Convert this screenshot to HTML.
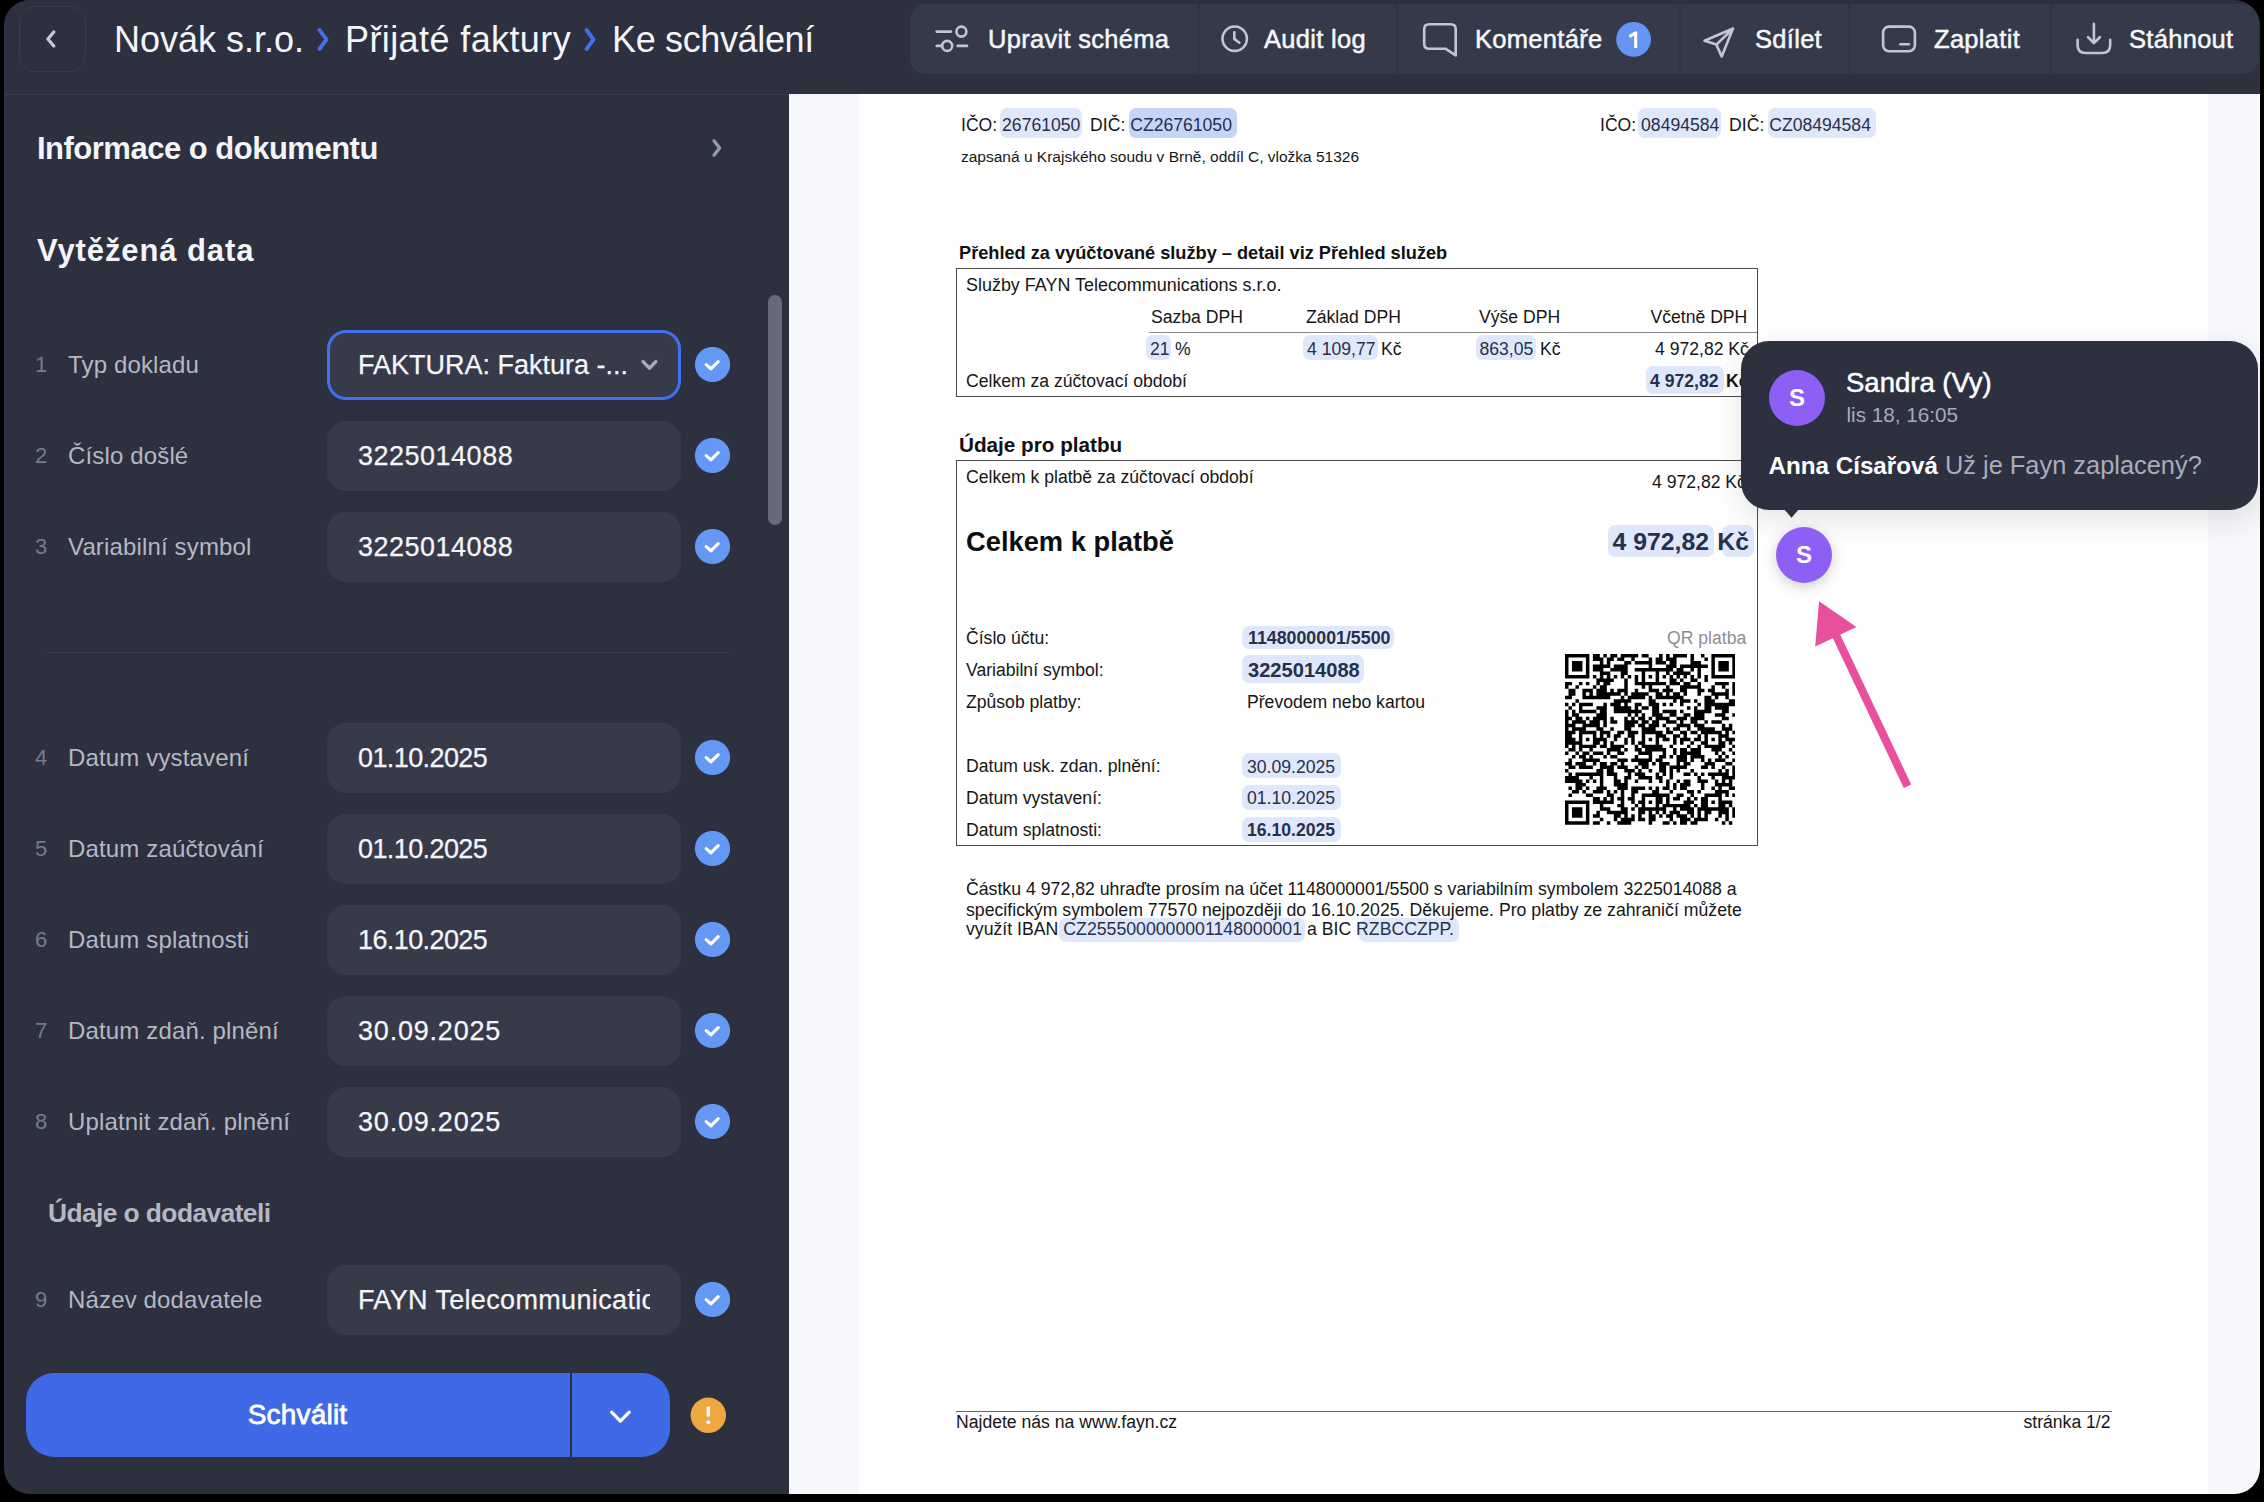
<!DOCTYPE html>
<html><head><meta charset="utf-8">
<style>
*{margin:0;padding:0;box-sizing:border-box}
html,body{width:2264px;height:1502px;background:#000;overflow:hidden;font-family:"Liberation Sans",sans-serif}
#app{position:absolute;left:4px;top:0;width:2256px;height:1494px;border-radius:26px;overflow:hidden;background:#2c303f}
.abs{position:absolute;white-space:nowrap}
#hdr{position:absolute;left:0;top:0;width:2256px;height:95px;background:#2c303f;border-bottom:1px solid #383c4c}
#back{position:absolute;left:15px;top:6px;width:67px;height:66px;border:1px solid #393c4e;border-radius:17px}
.crumb{position:absolute;top:20px;font-size:36px;color:#f4f5f8;line-height:40px}
.sep{color:#5480f2}
#tools{position:absolute;left:906px;top:4px;width:1349px;height:70px;background:#353a4b;border-radius:16px}
.tdiv{position:absolute;top:0;width:2px;height:70px;background:#2f3343}
.tl{position:absolute;top:22.4px;font-size:25.5px;letter-spacing:0.3px;color:#f6f7fa;line-height:34px;-webkit-text-stroke:0.5px #f6f7fa;white-space:nowrap}
#left{position:absolute;left:0;top:0;width:785px;height:1494px}
.h1{position:absolute;font-size:31px;font-weight:bold;color:#f4f5f8;line-height:36px}
.num{position:absolute;left:31px;font-size:22px;color:#767b8b;line-height:30px}
.lab{position:absolute;left:64px;font-size:24px;letter-spacing:0.15px;color:#b5b8c2;line-height:30px;white-space:nowrap}
.inp{position:absolute;left:323px;width:354px;height:70px;border-radius:19px;background:#373b49}
.val{position:absolute;left:31px;top:19px;font-size:27px;color:#f4f5f8;line-height:32px;white-space:nowrap;overflow:hidden;-webkit-text-stroke:0.25px #f4f5f8}
.chk{position:absolute;left:690px;width:35px;height:35px;border-radius:50%;background:#6597f5}
#doc{position:absolute;left:785px;top:94px;width:1471px;height:1400px;background:#f7f8fc}
#page{position:absolute;left:70px;top:0;width:1349px;height:1400px;background:#fff}
.d{position:absolute;white-space:nowrap;color:#111;font-size:17.5px;line-height:20px}
.hl{background:#dfe7fb;border-radius:7px}
</style></head><body>
<div id="app">
  <div id="hdr">
    <div id="back"><svg width="67" height="66" style="position:absolute;left:-1px;top:-1px"><path d="M34.8 26 L28.9 33 L34.8 40" fill="none" stroke="#c4c7d4" stroke-width="3.3" stroke-linecap="round" stroke-linejoin="round"/></svg></div>
    <div class="crumb" style="left:110px">Novák s.r.o.</div>
    <svg class="abs" style="left:310.5px;top:27px" width="16" height="26"><path d="M4.5 3 L11.5 12.5 L4.5 22" fill="none" stroke="#4370ea" stroke-width="3.8" stroke-linecap="round" stroke-linejoin="round"/></svg>
    <div class="crumb" style="left:341px;letter-spacing:0.4px">Přijaté faktury</div>
    <svg class="abs" style="left:578px;top:27px" width="16" height="26"><path d="M4.5 3 L11.5 12.5 L4.5 22" fill="none" stroke="#4370ea" stroke-width="3.8" stroke-linecap="round" stroke-linejoin="round"/></svg>
    <div class="crumb" style="left:608px;letter-spacing:-0.35px">Ke schválení</div>
    <div id="tools">
      <div class="tdiv" style="left:288px"></div>
      <div class="tdiv" style="left:486px"></div>
      <div class="tdiv" style="left:769px"></div>
      <div class="tdiv" style="left:938px"></div>
      <div class="tdiv" style="left:1140px"></div>
    </div>
    <svg class="abs" style="left:0;top:0" width="2256" height="94">
      <g fill="none" stroke="#c3c6d2" stroke-width="2.6" stroke-linecap="round">
        <!-- sliders -->
        <line x1="932.7" y1="31.6" x2="946.9" y2="31.6"/><circle cx="957.4" cy="31.6" r="5"/>
        <line x1="932.7" y1="45.9" x2="938" y2="45.9"/><circle cx="943.2" cy="45.9" r="5"/><line x1="953.7" y1="45.9" x2="963" y2="45.9"/>
        <!-- clock -->
        <circle cx="1230.7" cy="38.7" r="12.2"/><path d="M1230.3 32.4 V38.9 L1235.3 42.7" stroke-linejoin="round"/>
        <!-- comment -->
        <path d="M1425.2 24.2 H1446.7 Q1451.7 24.2 1451.7 29.2 V55.4 L1441.4 48.7 H1425.2 Q1420.2 48.7 1420.2 43.7 V29.2 Q1420.2 24.2 1425.2 24.2 Z" stroke-linejoin="round"/>
        <!-- send -->
        <path d="M1700.5 40.7 L1729 28.5 L1717.7 56.4 L1712.4 44.6 Z M1712.4 44.6 L1729 28.5" stroke-linejoin="round"/>
        <!-- card -->
        <rect x="1879.1" y="26.6" width="31.8" height="24.7" rx="6"/><line x1="1896.5" y1="44.2" x2="1904.8" y2="44.2"/>
        <!-- download -->
        <path d="M2089.9 23.9 V43.1 M2084 37.2 L2089.9 43.1 L2095.9 37.2" stroke-linejoin="round"/>
        <path d="M2073.6 39.7 V45 Q2073.6 53 2081.6 53 H2098.2 Q2106.2 53 2106.2 45 V39.7"/>
      </g>
      <circle cx="1629.6" cy="39.4" r="17.4" fill="#6595f3"/>
    </svg>
    <div class="tl" style="left:984px">Upravit schéma</div>
    <div class="tl" style="left:1260px">Audit log</div>
    <div class="tl" style="left:1471px">Komentáře</div>
    <svg class="abs" style="left:1612px;top:22px" width="36" height="36"><path d="M13.4 14.6 L19.7 10.8 V26" fill="none" stroke="#fff" stroke-width="3.1" stroke-linecap="butt" stroke-linejoin="round"/></svg>
    <div class="tl" style="left:1751px">Sdílet</div>
    <div class="tl" style="left:1930px">Zaplatit</div>
    <div class="tl" style="left:2125px">Stáhnout</div>
  </div>
  <div id="left">
<div class="h1" style="left:33px;top:131px;letter-spacing:-0.5px">Informace o dokumentu</div>
<svg class="abs" style="left:702px;top:136px" width="20" height="24"><path d="M8 4.8 L13.6 12 L8 19.2" fill="none" stroke="#959caf" stroke-width="3.3" stroke-linecap="round" stroke-linejoin="round"/></svg>
<div class="h1" style="left:33px;top:233px;letter-spacing:0.9px">Vytěžená data</div>
<div class="abs" style="left:764px;top:295px;width:14px;height:230px;border-radius:7px;background:#666a7b"></div>
<div class="abs" style="left:43px;top:652px;width:683px;height:1px;background:#383c4b"></div>
<div class="h1" style="left:44px;top:1195px;font-size:26.4px;letter-spacing:-0.6px;color:#b5b8c2">Údaje o dodavateli</div>
<div class="num" style="top:350px">1</div><div class="lab" style="top:350px">Typ dokladu</div>
<div class="inp" style="top:330px;border:3px solid #4270ee;background:#373b49"><div class="val" style="left:28px;top:16px">FAKTURA: Faktura -...</div><svg class="abs" style="left:310px;top:26px" width="20" height="16"><path d="M3.1 2.6 L9.4 9.2 L15.8 2.6" fill="none" stroke="#a9acb6" stroke-width="3.4" stroke-linecap="round" stroke-linejoin="round"/></svg></div>
<svg class="abs" style="left:690px;top:347px" width="36" height="36"><circle cx="18.5" cy="17.5" r="17.6" fill="#6597f5"/><path d="M12.2 17.6 L16.9 21.8 L24.2 14.6" fill="none" stroke="#fff" stroke-width="3.2" stroke-linecap="round" stroke-linejoin="round"/></svg>
<div class="num" style="top:441px">2</div><div class="lab" style="top:441px">Číslo došlé</div>
<div class="inp" style="top:421px"><div class="val" style="letter-spacing:0.5px">3225014088</div></div>
<svg class="abs" style="left:690px;top:438px" width="36" height="36"><circle cx="18.5" cy="17.5" r="17.6" fill="#6597f5"/><path d="M12.2 17.6 L16.9 21.8 L24.2 14.6" fill="none" stroke="#fff" stroke-width="3.2" stroke-linecap="round" stroke-linejoin="round"/></svg>
<div class="num" style="top:532px">3</div><div class="lab" style="top:532px">Variabilní symbol</div>
<div class="inp" style="top:512px"><div class="val" style="letter-spacing:0.5px">3225014088</div></div>
<svg class="abs" style="left:690px;top:529px" width="36" height="36"><circle cx="18.5" cy="17.5" r="17.6" fill="#6597f5"/><path d="M12.2 17.6 L16.9 21.8 L24.2 14.6" fill="none" stroke="#fff" stroke-width="3.2" stroke-linecap="round" stroke-linejoin="round"/></svg>
<div class="num" style="top:743px">4</div><div class="lab" style="top:743px">Datum vystavení</div>
<div class="inp" style="top:723px"><div class="val" style="letter-spacing:-0.6px">01.10.2025</div></div>
<svg class="abs" style="left:690px;top:740px" width="36" height="36"><circle cx="18.5" cy="17.5" r="17.6" fill="#6597f5"/><path d="M12.2 17.6 L16.9 21.8 L24.2 14.6" fill="none" stroke="#fff" stroke-width="3.2" stroke-linecap="round" stroke-linejoin="round"/></svg>
<div class="num" style="top:834px">5</div><div class="lab" style="top:834px">Datum zaúčtování</div>
<div class="inp" style="top:814px"><div class="val" style="letter-spacing:-0.6px">01.10.2025</div></div>
<svg class="abs" style="left:690px;top:831px" width="36" height="36"><circle cx="18.5" cy="17.5" r="17.6" fill="#6597f5"/><path d="M12.2 17.6 L16.9 21.8 L24.2 14.6" fill="none" stroke="#fff" stroke-width="3.2" stroke-linecap="round" stroke-linejoin="round"/></svg>
<div class="num" style="top:925px">6</div><div class="lab" style="top:925px">Datum splatnosti</div>
<div class="inp" style="top:905px"><div class="val" style="letter-spacing:-0.6px">16.10.2025</div></div>
<svg class="abs" style="left:690px;top:922px" width="36" height="36"><circle cx="18.5" cy="17.5" r="17.6" fill="#6597f5"/><path d="M12.2 17.6 L16.9 21.8 L24.2 14.6" fill="none" stroke="#fff" stroke-width="3.2" stroke-linecap="round" stroke-linejoin="round"/></svg>
<div class="num" style="top:1016px">7</div><div class="lab" style="top:1016px">Datum zdaň. plnění</div>
<div class="inp" style="top:996px"><div class="val" style="letter-spacing:0.8px">30.09.2025</div></div>
<svg class="abs" style="left:690px;top:1013px" width="36" height="36"><circle cx="18.5" cy="17.5" r="17.6" fill="#6597f5"/><path d="M12.2 17.6 L16.9 21.8 L24.2 14.6" fill="none" stroke="#fff" stroke-width="3.2" stroke-linecap="round" stroke-linejoin="round"/></svg>
<div class="num" style="top:1107px">8</div><div class="lab" style="top:1107px">Uplatnit zdaň. plnění</div>
<div class="inp" style="top:1087px"><div class="val" style="letter-spacing:0.8px">30.09.2025</div></div>
<svg class="abs" style="left:690px;top:1104px" width="36" height="36"><circle cx="18.5" cy="17.5" r="17.6" fill="#6597f5"/><path d="M12.2 17.6 L16.9 21.8 L24.2 14.6" fill="none" stroke="#fff" stroke-width="3.2" stroke-linecap="round" stroke-linejoin="round"/></svg>
<div class="num" style="top:1285px">9</div><div class="lab" style="top:1285px">Název dodavatele</div>
<div class="inp" style="top:1265px"><div class="val" style="width:292px;letter-spacing:0.35px">FAYN Telecommunications s.r.o.</div></div>
<svg class="abs" style="left:690px;top:1282px" width="36" height="36"><circle cx="18.5" cy="17.5" r="17.6" fill="#6597f5"/><path d="M12.2 17.6 L16.9 21.8 L24.2 14.6" fill="none" stroke="#fff" stroke-width="3.2" stroke-linecap="round" stroke-linejoin="round"/></svg>
<div class="abs" style="left:22px;top:1373px;width:644px;height:84px;border-radius:28px;background:#3f69e6"></div>
<div class="abs" style="left:566px;top:1373px;width:2px;height:84px;background:#2c303f"></div>
<div class="abs" style="left:22px;top:1393px;width:543px;text-align:center;font-size:28px;letter-spacing:0.2px;color:#fff;line-height:44px;-webkit-text-stroke:0.8px #fff">Schválit</div>
<svg class="abs" style="left:600px;top:1401px" width="32" height="28"><path d="M7.6 11.2 L16.4 20.1 L25.2 11.2" fill="none" stroke="#fff" stroke-width="3.3" stroke-linecap="round" stroke-linejoin="round"/></svg>
<svg class="abs" style="left:686px;top:1397px" width="36" height="36"><circle cx="18.3" cy="18.3" r="17.7" fill="#eea741"/><path d="M18.3 9.6 V19.6" stroke="#fff" stroke-width="3.4" stroke-linecap="butt"/><circle cx="18.3" cy="25.2" r="2" fill="#fff"/></svg>
</div>

  <div id="doc"><div id="page"></div></div>
<div id="P" style="position:absolute;left:-4px;top:0;width:2264px;height:1502px">
<!--DOC-->
<div class="abs" style="left:999.7px;top:107.8px;width:82.4px;height:29.9px;background:#dfe7fb;border-radius:7px"></div>
<div class="abs" style="left:1129.0px;top:107.8px;width:108.2px;height:29.9px;background:#c6d5f7;border-radius:7px"></div>
<div class="d" style="left:961px;top:116.60px;font-size:17.6px;line-height:17.6px;color:#161616;">IČO: <span style="color:#27304a">26761050</span>&nbsp; DIČ: <span style="color:#27304a">CZ26761050</span></div>
<div class="d" style="left:961px;top:148.98px;font-size:15.5px;line-height:15.5px;color:#161616;">zapsaná u Krajského soudu v Brně, oddíl C, vložka 51326</div>
<div class="abs" style="left:1638.3px;top:107.8px;width:82.7px;height:29.9px;background:#dfe7fb;border-radius:7px"></div>
<div class="abs" style="left:1767.5px;top:107.8px;width:108.1px;height:29.9px;background:#dfe7fb;border-radius:7px"></div>
<div class="d" style="left:1600px;top:116.60px;font-size:17.6px;line-height:17.6px;color:#161616;">IČO: <span style="color:#27304a">08494584</span>&nbsp; DIČ: <span style="color:#27304a">CZ08494584</span></div>
<div class="d" style="left:959px;top:243.99px;font-size:18.2px;line-height:18.2px;font-weight:bold;color:#111;">Přehled za vyúčtované služby – detail viz Přehled služeb</div>
<div class="abs" style="left:955.5px;top:267.8px;width:802.5px;height:129.2px;border:1.5px solid #4a4a4a"></div>
<div class="d" style="left:966px;top:276.91px;font-size:17.95px;line-height:17.95px;color:#161616;">Služby FAYN Telecommunications s.r.o.</div>
<div class="d" style="left:1151px;top:308.80px;font-size:17.6px;line-height:17.6px;color:#161616;">Sazba DPH</div>
<div class="d" style="left:1306px;top:308.80px;font-size:17.6px;line-height:17.6px;color:#161616;">Základ DPH</div>
<div class="d" style="left:1479px;top:308.80px;font-size:17.6px;line-height:17.6px;color:#161616;">Výše DPH</div>
<div class="d" style="left:1650.5px;top:308.80px;font-size:17.6px;line-height:17.6px;color:#161616;">Včetně DPH</div>
<div class="abs" style="left:1148.7px;top:331.5px;width:608.3px;height:1.3px;background:#8a8a8a"></div>
<div class="abs" style="left:1146.0px;top:334.8px;width:24.5px;height:25.7px;background:#dfe7fb;border-radius:7px"></div>
<div class="d" style="left:1150px;top:341.10px;font-size:17.6px;line-height:17.6px;color:#27304a;">21</div>
<div class="d" style="left:1175px;top:341.10px;font-size:17.6px;line-height:17.6px;color:#161616;">%</div>
<div class="abs" style="left:1303.2px;top:335.3px;width:75.1px;height:24.9px;background:#dfe7fb;border-radius:7px"></div>
<div class="d" style="left:1307px;top:341.10px;font-size:17.6px;line-height:17.6px;color:#27304a;">4 109,77</div>
<div class="d" style="left:1381px;top:341.10px;font-size:17.6px;line-height:17.6px;color:#161616;">Kč</div>
<div class="abs" style="left:1476.0px;top:335.3px;width:59.7px;height:24.9px;background:#dfe7fb;border-radius:7px"></div>
<div class="d" style="left:1479.5px;top:341.10px;font-size:17.6px;line-height:17.6px;color:#27304a;">863,05</div>
<div class="d" style="left:1540px;top:341.10px;font-size:17.6px;line-height:17.6px;color:#161616;">Kč</div>
<div class="d" style="left:1655px;top:341.10px;font-size:17.6px;line-height:17.6px;color:#161616;">4 972,82 Kč</div>
<div class="d" style="left:966px;top:372.80px;font-size:17.6px;line-height:17.6px;color:#161616;">Celkem za zúčtovací období</div>
<div class="abs" style="left:1645.5px;top:365.5px;width:78.4px;height:28.3px;background:#dfe7fb;border-radius:7px"></div>
<div class="d" style="left:1650px;top:372.50px;font-size:17.6px;line-height:17.6px;font-weight:bold;color:#27304a;">4 972,82</div>
<div class="d" style="left:1726px;top:372.50px;font-size:17.6px;line-height:17.6px;font-weight:bold;color:#161616;">Kč</div>
<div class="d" style="left:959px;top:435.18px;font-size:20.7px;line-height:20.7px;font-weight:bold;color:#111;">Údaje pro platbu</div>
<div class="abs" style="left:955.5px;top:460.3px;width:802.5px;height:385.49999999999994px;border:1.5px solid #4a4a4a"></div>
<div class="d" style="left:966px;top:469.10px;font-size:17.6px;line-height:17.6px;color:#161616;">Celkem k platbě za zúčtovací období</div>
<div class="d" style="left:1652px;top:473.90px;font-size:17.6px;line-height:17.6px;color:#161616;">4 972,82 Kč</div>
<div class="d" style="left:966px;top:528.39px;font-size:27.3px;line-height:27.3px;font-weight:bold;color:#0d0d0d;">Celkem k platbě</div>
<div class="abs" style="left:1608.1px;top:525.3px;width:105.9px;height:31.4px;background:#dfe7fb;border-radius:7px"></div>
<div class="abs" style="left:1722.0px;top:525.3px;width:31.8px;height:31.4px;background:#dfe7fb;border-radius:7px"></div>
<div class="d" style="left:1612.5px;top:530.21px;font-size:24.8px;line-height:24.8px;font-weight:bold;color:#27304a;">4 972,82</div>
<div class="d" style="left:1717.3px;top:530.21px;font-size:24.8px;line-height:24.8px;font-weight:bold;color:#27304a;">Kč</div>
<div class="d" style="left:966px;top:629.70px;font-size:17.6px;line-height:17.6px;color:#161616;">Číslo účtu:</div>
<div class="abs" style="left:1242.4px;top:626.0px;width:152.1px;height:23.3px;background:#dfe7fb;border-radius:7px"></div>
<div class="d" style="left:1248px;top:629.53px;font-size:17.8px;line-height:17.8px;font-weight:bold;color:#27304a;">1148000001/5500</div>
<div class="d" style="left:1667px;top:629.70px;font-size:17.6px;line-height:17.6px;color:#8e8e8e;">QR platba</div>
<div class="d" style="left:966px;top:662.00px;font-size:17.6px;line-height:17.6px;color:#161616;">Variabilní symbol:</div>
<div class="abs" style="left:1242.4px;top:654.5px;width:121.3px;height:28.2px;background:#dfe7fb;border-radius:7px"></div>
<div class="d" style="left:1248px;top:659.89px;font-size:20.1px;line-height:20.1px;font-weight:bold;color:#27304a;">3225014088</div>
<div class="d" style="left:966px;top:693.60px;font-size:17.6px;line-height:17.6px;color:#161616;">Způsob platby:</div>
<div class="d" style="left:1247px;top:693.60px;font-size:17.6px;line-height:17.6px;color:#161616;">Převodem nebo kartou</div>
<div class="d" style="left:966px;top:757.70px;font-size:17.6px;line-height:17.6px;color:#161616;">Datum usk. zdan. plnění:</div>
<div class="abs" style="left:1242.4px;top:753.2px;width:98.3px;height:24.8px;background:#dfe7fb;border-radius:7px"></div>
<div class="d" style="left:1247px;top:758.50px;font-size:17.6px;line-height:17.6px;color:#27304a;">30.09.2025</div>
<div class="d" style="left:966px;top:790.00px;font-size:17.6px;line-height:17.6px;color:#161616;">Datum vystavení:</div>
<div class="abs" style="left:1242.4px;top:784.8px;width:98.3px;height:24.8px;background:#dfe7fb;border-radius:7px"></div>
<div class="d" style="left:1247px;top:790.00px;font-size:17.6px;line-height:17.6px;color:#27304a;">01.10.2025</div>
<div class="d" style="left:966px;top:822.30px;font-size:17.6px;line-height:17.6px;color:#161616;">Datum splatnosti:</div>
<div class="abs" style="left:1242.4px;top:817.0px;width:98.3px;height:25.3px;background:#dfe7fb;border-radius:7px"></div>
<div class="d" style="left:1247px;top:822.30px;font-size:17.6px;line-height:17.6px;font-weight:bold;color:#27304a;">16.10.2025</div>
<div class="abs" style="left:1058.7px;top:917.5px;width:246.8px;height:24.9px;background:#dfe7fb;border-radius:7px"></div>
<div class="abs" style="left:1359.3px;top:917.5px;width:100.2px;height:24.9px;background:#dfe7fb;border-radius:7px"></div>
<div class="d" style="left:966px;top:881.22px;font-size:17.7px;line-height:17.7px;color:#161616;">Částku 4 972,82 uhraďte prosím na účet 1148000001/5500 s variabilním symbolem 3225014088 a</div>
<div class="d" style="left:966px;top:901.62px;font-size:17.7px;line-height:17.7px;color:#161616;">specifickým symbolem 77570 nejpozději do 16.10.2025. Děkujeme. Pro platby ze zahraničí můžete</div>
<div class="d" style="left:966px;top:921.22px;font-size:17.7px;line-height:17.7px;color:#161616;">využít IBAN <span style="color:#27304a">CZ2555000000001148000001</span> a BIC <span style="color:#27304a">RZBCCZPP.</span></div>
<div class="abs" style="left:955.5px;top:1410.6px;width:1156.5px;height:1.6px;background:#666"></div>
<div class="d" style="left:956px;top:1413.70px;font-size:17.6px;line-height:17.6px;color:#161616;">Najdete nás na www.fayn.cz</div>
<div class="d" style="left:2023.5px;top:1413.70px;font-size:17.6px;line-height:17.6px;color:#161616;">stránka 1/2</div>
<svg class="abs" style="left:1564.5px;top:654.1px" width="170.8" height="170.8" viewBox="0 0 49 49" ><path d="M0 0h7v1h-7zM8 0h2v1h-2zM11 0h1v1h-1zM13 0h2v1h-2zM16 0h5v1h-5zM22 0h2v1h-2zM27 0h1v1h-1zM29 0h1v1h-1zM31 0h4v1h-4zM36 0h1v1h-1zM39 0h1v1h-1zM42 0h7v1h-7zM0 1h1v1h-1zM6 1h1v1h-1zM8 1h3v1h-3zM12 1h2v1h-2zM15 1h2v1h-2zM19 1h1v1h-1zM24 1h1v1h-1zM26 1h2v1h-2zM29 1h3v1h-3zM36 1h1v1h-1zM40 1h1v1h-1zM42 1h1v1h-1zM48 1h1v1h-1zM0 2h1v1h-1zM2 2h3v1h-3zM6 2h1v1h-1zM10 2h1v1h-1zM12 2h1v1h-1zM17 2h2v1h-2zM20 2h5v1h-5zM26 2h3v1h-3zM30 2h2v1h-2zM36 2h3v1h-3zM42 2h1v1h-1zM44 2h3v1h-3zM48 2h1v1h-1zM0 3h1v1h-1zM2 3h3v1h-3zM6 3h1v1h-1zM8 3h5v1h-5zM14 3h4v1h-4zM24 3h1v1h-1zM29 3h3v1h-3zM33 3h8v1h-8zM42 3h1v1h-1zM44 3h3v1h-3zM48 3h1v1h-1zM0 4h1v1h-1zM2 4h3v1h-3zM6 4h1v1h-1zM8 4h3v1h-3zM13 4h5v1h-5zM20 4h11v1h-11zM32 4h2v1h-2zM36 4h1v1h-1zM38 4h1v1h-1zM42 4h1v1h-1zM44 4h3v1h-3zM48 4h1v1h-1zM0 5h1v1h-1zM6 5h1v1h-1zM10 5h3v1h-3zM16 5h2v1h-2zM22 5h1v1h-1zM26 5h1v1h-1zM29 5h1v1h-1zM31 5h5v1h-5zM38 5h1v1h-1zM42 5h1v1h-1zM48 5h1v1h-1zM0 6h7v1h-7zM8 6h1v1h-1zM10 6h1v1h-1zM12 6h1v1h-1zM14 6h1v1h-1zM16 6h1v1h-1zM18 6h1v1h-1zM20 6h1v1h-1zM22 6h1v1h-1zM24 6h1v1h-1zM26 6h1v1h-1zM28 6h1v1h-1zM30 6h1v1h-1zM32 6h1v1h-1zM34 6h1v1h-1zM36 6h1v1h-1zM38 6h1v1h-1zM40 6h1v1h-1zM42 6h7v1h-7zM9 7h5v1h-5zM17 7h1v1h-1zM20 7h1v1h-1zM22 7h1v1h-1zM26 7h1v1h-1zM30 7h2v1h-2zM33 7h1v1h-1zM36 7h2v1h-2zM40 7h1v1h-1zM0 8h2v1h-2zM4 8h1v1h-1zM6 8h1v1h-1zM9 8h1v1h-1zM11 8h2v1h-2zM17 8h1v1h-1zM20 8h9v1h-9zM30 8h3v1h-3zM34 8h2v1h-2zM38 8h1v1h-1zM43 8h4v1h-4zM48 8h1v1h-1zM0 9h1v1h-1zM3 9h1v1h-1zM8 9h1v1h-1zM10 9h2v1h-2zM17 9h1v1h-1zM22 9h1v1h-1zM24 9h1v1h-1zM29 9h1v1h-1zM33 9h6v1h-6zM42 9h1v1h-1zM45 9h1v1h-1zM48 9h1v1h-1zM1 10h2v1h-2zM5 10h3v1h-3zM9 10h3v1h-3zM13 10h1v1h-1zM15 10h3v1h-3zM20 10h1v1h-1zM24 10h3v1h-3zM28 10h3v1h-3zM33 10h2v1h-2zM38 10h2v1h-2zM41 10h2v1h-2zM46 10h1v1h-1zM48 10h1v1h-1zM1 11h2v1h-2zM5 11h1v1h-1zM7 11h1v1h-1zM9 11h7v1h-7zM17 11h1v1h-1zM19 11h5v1h-5zM26 11h2v1h-2zM29 11h1v1h-1zM31 11h2v1h-2zM34 11h1v1h-1zM38 11h1v1h-1zM42 11h5v1h-5zM48 11h1v1h-1zM0 12h2v1h-2zM5 12h8v1h-8zM16 12h1v1h-1zM18 12h5v1h-5zM24 12h1v1h-1zM26 12h8v1h-8zM40 12h2v1h-2zM43 12h1v1h-1zM46 12h1v1h-1zM3 13h1v1h-1zM14 13h5v1h-5zM24 13h2v1h-2zM31 13h1v1h-1zM33 13h3v1h-3zM37 13h1v1h-1zM40 13h3v1h-3zM47 13h2v1h-2zM0 14h1v1h-1zM2 14h1v1h-1zM4 14h4v1h-4zM11 14h1v1h-1zM13 14h3v1h-3zM17 14h1v1h-1zM20 14h2v1h-2zM24 14h3v1h-3zM28 14h1v1h-1zM30 14h1v1h-1zM33 14h1v1h-1zM38 14h1v1h-1zM40 14h9v1h-9zM1 15h1v1h-1zM4 15h1v1h-1zM9 15h3v1h-3zM14 15h5v1h-5zM20 15h1v1h-1zM22 15h2v1h-2zM25 15h2v1h-2zM35 15h1v1h-1zM37 15h1v1h-1zM40 15h2v1h-2zM43 15h4v1h-4zM0 16h1v1h-1zM2 16h1v1h-1zM4 16h5v1h-5zM10 16h2v1h-2zM14 16h8v1h-8zM25 16h2v1h-2zM28 16h4v1h-4zM33 16h1v1h-1zM37 16h5v1h-5zM45 16h2v1h-2zM0 17h1v1h-1zM2 17h2v1h-2zM9 17h3v1h-3zM18 17h1v1h-1zM20 17h1v1h-1zM22 17h1v1h-1zM25 17h3v1h-3zM30 17h2v1h-2zM34 17h2v1h-2zM37 17h3v1h-3zM43 17h3v1h-3zM48 17h1v1h-1zM0 18h2v1h-2zM3 18h2v1h-2zM6 18h1v1h-1zM8 18h4v1h-4zM13 18h1v1h-1zM17 18h1v1h-1zM19 18h1v1h-1zM21 18h2v1h-2zM24 18h1v1h-1zM26 18h4v1h-4zM32 18h3v1h-3zM36 18h4v1h-4zM45 18h2v1h-2zM0 19h1v1h-1zM2 19h4v1h-4zM7 19h3v1h-3zM11 19h1v1h-1zM13 19h2v1h-2zM17 19h4v1h-4zM22 19h2v1h-2zM25 19h2v1h-2zM29 19h3v1h-3zM33 19h1v1h-1zM36 19h2v1h-2zM40 19h1v1h-1zM42 19h3v1h-3zM0 20h3v1h-3zM5 20h5v1h-5zM11 20h1v1h-1zM17 20h3v1h-3zM21 20h2v1h-2zM24 20h3v1h-3zM28 20h1v1h-1zM32 20h4v1h-4zM37 20h3v1h-3zM45 20h1v1h-1zM47 20h1v1h-1zM0 21h1v1h-1zM2 21h4v1h-4zM9 21h2v1h-2zM13 21h1v1h-1zM17 21h2v1h-2zM22 21h4v1h-4zM29 21h1v1h-1zM31 21h2v1h-2zM35 21h1v1h-1zM38 21h5v1h-5zM45 21h3v1h-3zM0 22h3v1h-3zM4 22h5v1h-5zM10 22h3v1h-3zM15 22h2v1h-2zM18 22h3v1h-3zM22 22h6v1h-6zM29 22h2v1h-2zM33 22h2v1h-2zM36 22h2v1h-2zM39 22h6v1h-6zM46 22h1v1h-1zM48 22h1v1h-1zM0 23h2v1h-2zM4 23h1v1h-1zM8 23h1v1h-1zM10 23h1v1h-1zM12 23h1v1h-1zM14 23h2v1h-2zM18 23h2v1h-2zM22 23h1v1h-1zM26 23h3v1h-3zM31 23h2v1h-2zM34 23h1v1h-1zM38 23h1v1h-1zM40 23h1v1h-1zM44 23h3v1h-3zM0 24h3v1h-3zM4 24h1v1h-1zM6 24h1v1h-1zM8 24h4v1h-4zM14 24h1v1h-1zM17 24h1v1h-1zM19 24h1v1h-1zM22 24h1v1h-1zM24 24h1v1h-1zM26 24h1v1h-1zM28 24h2v1h-2zM31 24h1v1h-1zM33 24h3v1h-3zM37 24h2v1h-2zM40 24h1v1h-1zM42 24h1v1h-1zM44 24h1v1h-1zM46 24h3v1h-3zM0 25h5v1h-5zM8 25h2v1h-2zM11 25h1v1h-1zM13 25h1v1h-1zM17 25h1v1h-1zM19 25h1v1h-1zM21 25h2v1h-2zM26 25h1v1h-1zM31 25h1v1h-1zM33 25h1v1h-1zM36 25h1v1h-1zM39 25h2v1h-2zM44 25h2v1h-2zM47 25h1v1h-1zM0 26h1v1h-1zM2 26h1v1h-1zM4 26h5v1h-5zM10 26h2v1h-2zM13 26h4v1h-4zM20 26h1v1h-1zM22 26h6v1h-6zM30 26h1v1h-1zM35 26h1v1h-1zM38 26h1v1h-1zM40 26h6v1h-6zM48 26h1v1h-1zM1 27h2v1h-2zM4 27h1v1h-1zM7 27h1v1h-1zM12 27h4v1h-4zM17 27h1v1h-1zM20 27h2v1h-2zM23 27h6v1h-6zM31 27h1v1h-1zM33 27h2v1h-2zM36 27h3v1h-3zM42 27h3v1h-3zM47 27h1v1h-1zM0 28h1v1h-1zM3 28h1v1h-1zM5 28h2v1h-2zM8 28h3v1h-3zM12 28h1v1h-1zM15 28h2v1h-2zM21 28h4v1h-4zM28 28h1v1h-1zM31 28h1v1h-1zM33 28h6v1h-6zM43 28h1v1h-1zM45 28h1v1h-1zM48 28h1v1h-1zM2 29h1v1h-1zM4 29h2v1h-2zM7 29h1v1h-1zM11 29h1v1h-1zM13 29h2v1h-2zM20 29h1v1h-1zM24 29h1v1h-1zM27 29h2v1h-2zM30 29h1v1h-1zM32 29h3v1h-3zM36 29h4v1h-4zM44 29h1v1h-1zM46 29h1v1h-1zM1 30h1v1h-1zM5 30h5v1h-5zM15 30h3v1h-3zM19 30h6v1h-6zM26 30h2v1h-2zM32 30h3v1h-3zM36 30h1v1h-1zM39 30h1v1h-1zM41 30h1v1h-1zM43 30h3v1h-3zM48 30h1v1h-1zM0 31h2v1h-2zM3 31h3v1h-3zM8 31h1v1h-1zM10 31h2v1h-2zM13 31h2v1h-2zM16 31h1v1h-1zM21 31h3v1h-3zM25 31h1v1h-1zM27 31h3v1h-3zM32 31h1v1h-1zM34 31h2v1h-2zM40 31h3v1h-3zM46 31h2v1h-2zM1 32h2v1h-2zM4 32h4v1h-4zM10 32h4v1h-4zM15 32h3v1h-3zM20 32h1v1h-1zM22 32h2v1h-2zM27 32h2v1h-2zM30 32h5v1h-5zM39 32h2v1h-2zM42 32h1v1h-1zM45 32h1v1h-1zM48 32h1v1h-1zM0 33h1v1h-1zM9 33h2v1h-2zM12 33h2v1h-2zM17 33h3v1h-3zM21 33h1v1h-1zM24 33h1v1h-1zM27 33h2v1h-2zM30 33h1v1h-1zM32 33h1v1h-1zM36 33h1v1h-1zM44 33h1v1h-1zM46 33h1v1h-1zM48 33h1v1h-1zM1 34h1v1h-1zM3 34h8v1h-8zM12 34h3v1h-3zM18 34h1v1h-1zM20 34h3v1h-3zM26 34h1v1h-1zM28 34h1v1h-1zM30 34h1v1h-1zM34 34h2v1h-2zM37 34h1v1h-1zM39 34h1v1h-1zM41 34h6v1h-6zM48 34h1v1h-1zM0 35h4v1h-4zM7 35h1v1h-1zM10 35h1v1h-1zM14 35h1v1h-1zM17 35h2v1h-2zM21 35h4v1h-4zM26 35h2v1h-2zM30 35h1v1h-1zM38 35h1v1h-1zM42 35h1v1h-1zM45 35h4v1h-4zM0 36h5v1h-5zM6 36h1v1h-1zM8 36h1v1h-1zM10 36h1v1h-1zM14 36h2v1h-2zM17 36h1v1h-1zM20 36h1v1h-1zM24 36h1v1h-1zM27 36h1v1h-1zM29 36h1v1h-1zM32 36h1v1h-1zM34 36h2v1h-2zM38 36h3v1h-3zM43 36h1v1h-1zM45 36h1v1h-1zM47 36h1v1h-1zM3 37h3v1h-3zM10 37h1v1h-1zM14 37h4v1h-4zM29 37h1v1h-1zM31 37h1v1h-1zM33 37h3v1h-3zM39 37h1v1h-1zM43 37h5v1h-5zM1 38h1v1h-1zM3 38h2v1h-2zM6 38h1v1h-1zM9 38h3v1h-3zM15 38h3v1h-3zM19 38h4v1h-4zM24 38h1v1h-1zM26 38h1v1h-1zM28 38h2v1h-2zM31 38h1v1h-1zM33 38h2v1h-2zM39 38h1v1h-1zM42 38h1v1h-1zM44 38h1v1h-1zM47 38h2v1h-2zM2 39h2v1h-2zM5 39h1v1h-1zM8 39h3v1h-3zM12 39h1v1h-1zM14 39h1v1h-1zM16 39h1v1h-1zM19 39h2v1h-2zM25 39h2v1h-2zM30 39h1v1h-1zM35 39h2v1h-2zM38 39h1v1h-1zM43 39h4v1h-4zM1 40h1v1h-1zM6 40h2v1h-2zM12 40h2v1h-2zM16 40h1v1h-1zM19 40h1v1h-1zM22 40h8v1h-8zM32 40h2v1h-2zM36 40h1v1h-1zM40 40h5v1h-5zM46 40h1v1h-1zM48 40h1v1h-1zM8 41h2v1h-2zM11 41h1v1h-1zM13 41h1v1h-1zM15 41h2v1h-2zM18 41h2v1h-2zM22 41h1v1h-1zM26 41h2v1h-2zM29 41h1v1h-1zM31 41h2v1h-2zM35 41h1v1h-1zM37 41h1v1h-1zM39 41h2v1h-2zM44 41h1v1h-1zM0 42h7v1h-7zM8 42h6v1h-6zM16 42h1v1h-1zM19 42h1v1h-1zM21 42h2v1h-2zM24 42h1v1h-1zM26 42h2v1h-2zM29 42h1v1h-1zM34 42h3v1h-3zM39 42h2v1h-2zM42 42h1v1h-1zM44 42h4v1h-4zM0 43h1v1h-1zM6 43h1v1h-1zM10 43h1v1h-1zM15 43h2v1h-2zM20 43h1v1h-1zM22 43h1v1h-1zM26 43h1v1h-1zM28 43h8v1h-8zM37 43h1v1h-1zM39 43h2v1h-2zM44 43h2v1h-2zM47 43h1v1h-1zM0 44h1v1h-1zM2 44h3v1h-3zM6 44h1v1h-1zM10 44h3v1h-3zM16 44h2v1h-2zM19 44h1v1h-1zM21 44h8v1h-8zM31 44h1v1h-1zM33 44h4v1h-4zM38 44h9v1h-9zM48 44h1v1h-1zM0 45h1v1h-1zM2 45h3v1h-3zM6 45h1v1h-1zM9 45h1v1h-1zM12 45h6v1h-6zM21 45h2v1h-2zM24 45h1v1h-1zM26 45h1v1h-1zM28 45h1v1h-1zM30 45h3v1h-3zM35 45h2v1h-2zM38 45h1v1h-1zM40 45h2v1h-2zM44 45h3v1h-3zM48 45h1v1h-1zM0 46h1v1h-1zM2 46h3v1h-3zM6 46h1v1h-1zM8 46h2v1h-2zM14 46h2v1h-2zM17 46h1v1h-1zM19 46h1v1h-1zM21 46h1v1h-1zM24 46h2v1h-2zM27 46h1v1h-1zM29 46h2v1h-2zM32 46h3v1h-3zM36 46h1v1h-1zM38 46h1v1h-1zM40 46h1v1h-1zM44 46h1v1h-1zM46 46h1v1h-1zM48 46h1v1h-1zM0 47h1v1h-1zM6 47h1v1h-1zM10 47h1v1h-1zM14 47h1v1h-1zM16 47h4v1h-4zM21 47h2v1h-2zM24 47h2v1h-2zM30 47h1v1h-1zM33 47h3v1h-3zM37 47h4v1h-4zM43 47h1v1h-1zM46 47h1v1h-1zM0 48h7v1h-7zM8 48h2v1h-2zM12 48h1v1h-1zM15 48h4v1h-4zM24 48h1v1h-1zM28 48h2v1h-2zM31 48h1v1h-1zM33 48h2v1h-2zM36 48h2v1h-2zM45 48h1v1h-1zM47 48h1v1h-1z" fill="#000"/></svg>
<!--/DOC-->
<!--POP-->
<div class="abs" style="left:1741px;top:341px;width:516.5px;height:168.5px;border-radius:28px;background:#2c303f;box-shadow:0 10px 30px rgba(30,35,50,0.12)"></div>
<svg class="abs" style="left:1780px;top:508px" width="24" height="12"><path d="M3 0 L11.5 9.7 L20 0 Z" fill="#2c303f"/></svg>
<div class="abs" style="left:1769px;top:370px;width:56px;height:56px;border-radius:50%;background:#8d5ff5"></div>
<div class="abs" style="left:1769px;top:386.3px;width:56px;text-align:center;font-size:24px;line-height:24px;font-weight:bold;color:#fff">S</div>
<div class="abs" style="left:1846px;top:368.5px;font-size:27.5px;line-height:27.5px;color:#fff;-webkit-text-stroke:0.5px #fff">Sandra (Vy)</div>
<div class="abs" style="left:1846.5px;top:405px;font-size:20.7px;line-height:20.7px;color:#a6aabb">lis 18, 16:05</div>
<div class="abs" style="left:1768.5px;top:452.5px;font-size:25.4px;line-height:25.4px;color:#a9adbd"><b style="color:#fff;font-size:24.2px">Anna Císařová</b> Už je Fayn zaplacený?</div>
<div class="abs" style="left:1776px;top:527px;width:56px;height:56px;border-radius:50%;background:#8d5ff5;box-shadow:0 4px 14px rgba(40,40,60,0.22)"></div>
<div class="abs" style="left:1776px;top:543.3px;width:56px;text-align:center;font-size:24px;line-height:24px;font-weight:bold;color:#fff">S</div>
<svg class="abs" style="left:0;top:0" width="2264" height="1502"><path d="M1819.1 601.2 L1856.4 627.1 L1815.2 646.6 Z" fill="#e84f9d"/><line x1="1834" y1="631" x2="1907.5" y2="786.2" stroke="#e84f9d" stroke-width="8.2"/></svg>

<!--/POP-->
</div>

</div>
</body></html>
